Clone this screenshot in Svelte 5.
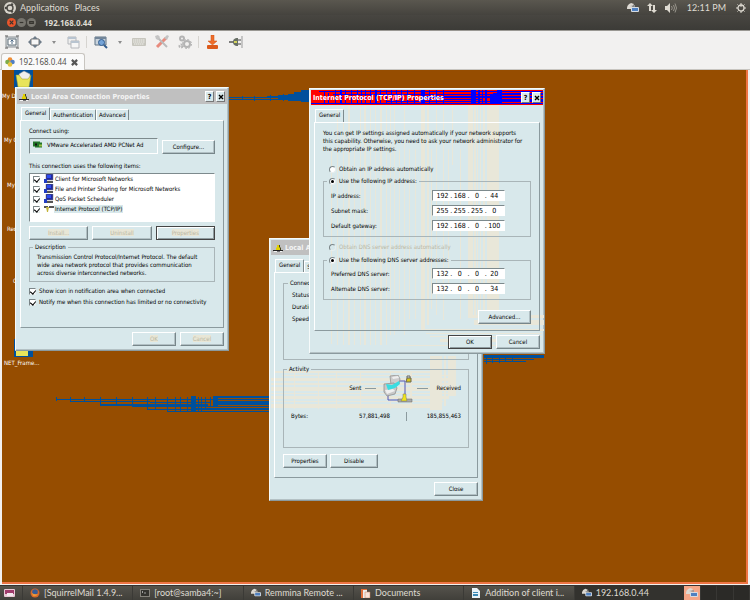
<script>
  const shortcuts = [
    { label: "My Documents", x: 0, y: 22 },
    { label: "My Computer", x: 2, y: 66 },
    { label: "My Network Places", x: 5, y: 111 },
    { label: "Recycle Bin", x: 5, y: 155 },
    { label: "Connections", x: 11, y: 207 },
    { label: "NET_Frame...", x: 2, y: 289 }
  ];

  let items = [
    { name: "Client for Microsoft Networks", icon: "pc", on: true },
    { name: "File and Printer Sharing for Microsoft Networks", icon: "pc", on: true },
    { name: "QoS Packet Scheduler", icon: "pc", on: true },
    { name: "Internet Protocol (TCP/IP)", icon: "proto", on: true, selected: true }
  ];

  const addresses = [
    { id: "ip", label: "IP address:", octets: [192, 168, 0, 44] },
    { id: "mask", label: "Subnet mask:", octets: [255, 255, 255, 0] },
    { id: "gateway", label: "Default gateway:", octets: [192, 168, 0, 100] }
  ];
  const servers = [
    { id: "dns1", label: "Preferred DNS server:", octets: [132, 0, 0, 20] },
    { id: "dns2", label: "Alternate DNS server:", octets: [132, 0, 0, 34] }
  ];

  const tasks = [
    { label: "[SquirrelMail 1.4.9...", icon: "firefox" },
    { label: "[root@samba4:~]", icon: "terminal" },
    { label: "Remmina Remote ...", icon: "remmina" },
    { label: "Documents", icon: "files" },
    { label: "Addition of client i...", icon: "doc" },
    { label: "192.168.0.44", icon: "remmina", active: true }
  ];

  // traces left behind by the dragged windows: [x, y, width, height]
  const smear = [
    [54, 327, 1, 4], [54, 329, 50, 1], [68, 327, 1, 5], [68, 331, 80, 1],
    [82, 327, 1, 5], [98, 327, 1, 9], [98, 334, 108, 2], [114, 327, 1, 8],
    [130, 327, 1, 10], [130, 336, 70, 1], [145, 327, 1, 13], [145, 339, 60, 1],
    [153, 327, 1, 12], [165, 327, 1, 15], [165, 341, 102, 1], [173, 327, 1, 14],
    [178, 327, 1, 14], [185, 327, 1, 14], [189, 326, 5, 16], [196, 327, 1, 14],
    [199, 327, 1, 14], [203, 327, 1, 12], [208, 327, 1, 10], [211, 326, 5, 10],
    [212, 326, 56, 2], [212, 329, 56, 1], [212, 331, 56, 4], [190, 336, 78, 1],
    [194, 338, 74, 2], [104, 329, 110, 1], [148, 332, 60, 1],
    [227, 27, 80, 1], [227, 29, 80, 1], [240, 26, 1, 4], [252, 26, 1, 5],
    [265, 26, 42, 1], [268, 25, 1, 6], [276, 25, 31, 1], [276, 28, 31, 1],
    [281, 24, 1, 7], [286, 24, 21, 3], [286, 30, 21, 1], [292, 22, 15, 8],
    [299, 20, 8, 12],
    [482, 285, 60, 3], [482, 289, 50, 1], [482, 291, 42, 1], [484, 285, 1, 9],
    [490, 285, 1, 8], [497, 285, 1, 8], [503, 285, 1, 7], [510, 285, 1, 6],
    [515, 285, 25, 3]
  ];
  const stripes = [
    [21, 60, 1, 195], [27, 16, 1, 240], [33, 16, 1, 240], [38, 16, 2, 240],
    [44, 60, 1, 196], [50, 16, 1, 240], [54, 16, 2, 240], [60, 16, 1, 240],
    [65, 16, 1, 240], [70, 16, 2, 240], [76, 16, 1, 240], [80, 16, 1, 230],
    [84, 16, 1, 230], [89, 60, 1, 180], [94, 16, 1, 230], [99, 60, 1, 170],
    [105, 60, 1, 170], [111, 16, 4, 226], [117, 16, 2, 220], [121, 60, 1, 160],
    [126, 16, 1, 210], [133, 16, 1, 215], [138, 60, 1, 140], [142, 16, 1, 60],
    [150, 60, 1, 170], [158, 16, 5, 210], [164, 16, 2, 210], [167, 16, 1, 210],
    [170, 16, 1, 210], [173, 16, 2, 210], [177, 16, 12, 215],
    [158, 226, 76, 3], [164, 231, 70, 5], [112, 240, 122, 2],
    [116, 244, 116, 1], [120, 247, 112, 1], [130, 250, 100, 3], [90, 256, 140, 1]
  ];
  const haze = [
    [160, 117, 12, 54], [174, 117, 2, 50], [178, 117, 8, 40],
    [4, 132, 156, 2], [12, 136, 170, 1], [1, 139, 185, 3], [1, 144, 185, 2],
    [1, 148, 185, 4], [1, 154, 182, 1], [1, 157, 178, 3], [1, 162, 172, 1],
    [1, 165, 170, 4], [24, 132, 1, 38], [48, 132, 1, 38], [66, 132, 1, 38],
    [90, 132, 1, 38], [120, 132, 1, 38], [140, 132, 2, 38]
  ];
  const titleBlue = [
    [13, 1, 1, 13], [17, 3, 1, 11], [24, 0, 1, 14], [29, 0, 2, 14], [34, 0, 1, 14],
    [40, 0, 1, 14], [46, 0, 1, 14], [50, 0, 1, 14], [54, 0, 1, 14], [59, 0, 1, 14],
    [64, 0, 2, 14], [69, 0, 1, 14], [75, 0, 1, 14], [80, 0, 1, 14], [85, 0, 1, 14],
    [90, 0, 1, 14], [96, 0, 1, 14], [103, 0, 1, 14], [110, 0, 4, 14], [118, 0, 1, 14],
    [125, 0, 1, 14], [132, 0, 1, 14], [8, 1, 228, 1], [0, 13, 236, 1],
    [22, 4, 214, 1], [75, 11, 161, 1], [112, 6, 124, 2], [112, 9, 60, 1],
    [160, 0, 5, 14], [167, 0, 2, 14], [171, 0, 1, 14], [174, 0, 2, 14],
    [179, 5, 9, 8], [182, 3, 6, 11], [186, 0, 5, 14], [190, 9, 46, 2], [190, 3, 46, 2]
  ];

  let ipMode = "manual";
  let dnsMode = "manual";
  let showIcon = true;
  let notify = true;
</script>

{#snippet rects(list)}
  {#each list as [x, y, width, height]}
    <rect {x} {y} {width} {height} />
  {/each}
{/snippet}

{#snippet netIcon()}
  <svg class="net" viewBox="0 0 10 10" aria-hidden="true">
    <path d="M0 7h10v1H0z" fill="#222" />
    <path d="M1 8h8v1H1z" fill="#f4f4f4" />
    <path d="M4 2h2v2l1 1v2H3V5l1-1z" fill="#e2d000" />
    <path d="M6 2h1v2l1 1v2H7V5L6 4z" fill="#44431c" />
    <path d="M4 8h3v1H4z" fill="#777" />
  </svg>
{/snippet}

{#snippet remmina()}
  <svg class="remmina" viewBox="0 0 12 10" aria-hidden="true">
    <path d="M0 6C0 2 2 1 4 0l3 1-2 3v2z" fill="#ddd9d2" />
    <path d="M3 3l5-1v2z" fill="#999" />
    <rect x="4" y="4" width="8" height="5" rx="1" fill="#d5dbe2" />
    <rect x="5" y="5" width="6" height="3" fill="#4f80c0" />
  </svg>
{/snippet}

{#snippet addressRow(row)}
  <div class="address">
    <label for={row.id}>{row.label}</label>
    <span class="octets">
      {#each row.octets as octet, i}
        {#if i > 0}<span class="dot">.</span>{/if}
        <input id={i === 0 ? row.id : undefined} aria-label={i ? `${row.label} part ${i + 1}` : undefined} value={octet} />
      {/each}
    </span>
  </div>
{/snippet}

<div class="screen">
  <header class="panel-bar">
    <svg class="ubuntu" viewBox="0 0 12 12" aria-hidden="true">
      <circle cx="6" cy="6" r="6" fill="#d8d4cb" />
      <circle cx="6" cy="6" r="3" fill="none" stroke="#4a4843" stroke-width="1.4" />
      <g fill="#4a4843"><circle cx="1.9" cy="6" r="1.2" /><circle cx="8" cy="2.4" r="1.2" /><circle cx="8" cy="9.6" r="1.2" /></g>
    </svg>
    <button>Applications</button>
    <button>Places</button>
    <div class="tray">
      {@render remmina()}
      <svg class="arrows" viewBox="0 0 10 10" aria-hidden="true">
        <path d="M3 0L0 3h2v5h2V3h2zM7 10l3-3H8V2H6v5H4z" fill="#dfdbd2" />
      </svg>
      <svg class="sound" viewBox="0 0 12 10" aria-hidden="true">
        <path d="M0 3h2l3-3v10L2 7H0z" fill="#dfdbd2" />
        <path d="M6.500 3q1.500 2 0 4M8.500 2q2 3 0 6M10 .5q3 4.500 0 9" fill="none" stroke="#99958c" />
      </svg>
      <span>12:11 PM</span>
      <svg class="power" viewBox="0 0 10 10" aria-hidden="true">
        <circle cx="5" cy="5" r="3" fill="none" stroke="#dfdbd2" stroke-width="1.300" />
        <path d="M5 0v4M0 5h2M8 5h2M1.500 1.500l1 1M8.500 1.500l-1 1M1.500 8.500l1-1M8.500 8.500l-1-1M5 8v2" stroke="#dfdbd2" />
      </svg>
    </div>
  </header>

  <div class="title-bar">
    <button class="round close" aria-label="Close"><svg viewBox="0 0 10 10"><path d="M3 3l4 4M7 3L3 7" /></svg></button>
    <button class="round" aria-label="Minimize"><svg viewBox="0 0 10 10"><path d="M3 5h4" /></svg></button>
    <button class="round" aria-label="Maximize"><svg viewBox="0 0 10 10"><path d="M3 4h4v2H3z" /></svg></button>
    <h1>192.168.0.44</h1>
  </div>

  <nav class="toolbar">
    <button aria-label="Fit window">
      <svg viewBox="0 0 14 14">
        <path d="M1 2h12v10H1z" fill="#d9dcde" stroke="#8a9094" />
        <path d="M3 4h8v6H3z" fill="#fff" stroke="#5f6e78" />
        <path d="M0 1h3M11 1h3M0 13h3M11 13h3" stroke="#555" fill="none" />
        <path d="M7 5v4M5.500 6.500L7 5l1.500 1.500" stroke="#506c88" fill="none" />
      </svg>
    </button>
    <button aria-label="Fullscreen">
      <svg viewBox="0 0 14 14">
        <path d="M3 4h8v6H3z" fill="#f6f6f6" stroke="#777" />
        <path d="M7 1l3 3H4zM7 13l3-3H4zM0 7l3-3v6zM14 7l-3-3v6z" fill="#6f7c88" />
      </svg>
    </button>
    <button class="caret" aria-label="Fullscreen options"><svg viewBox="0 0 6 6"><path d="M1 2h4L3 5z" fill="#8c8c8c" /></svg></button>
    <button aria-label="Switch pages">
      <svg viewBox="0 0 14 14">
        <path d="M2 2h8v7H2z" fill="#eee" stroke="#b5b7bb" /><path d="M2 2h8v2H2z" fill="#b8c4d0" />
        <path d="M5 6h8v7H5z" fill="#f6f6f6" stroke="#b5b7bb" /><path d="M5 6h8v2H5z" fill="#b8c4d0" />
      </svg>
    </button>
    <span class="rule"></span>
    <button aria-label="Scaled mode">
      <svg viewBox="0 0 14 14">
        <path d="M1 2h11v8H1z" fill="#c9d3dc" stroke="#617486" /><path d="M1 2h11v2H1z" fill="#738699" />
        <circle cx="7.500" cy="7.500" r="3" fill="#75a4d8" stroke="#345e8e" /><path d="M10 10l3 3" stroke="#345e8e" stroke-width="2" />
      </svg>
    </button>
    <button class="caret" aria-label="Scale options"><svg viewBox="0 0 6 6"><path d="M1 2h4L3 5z" fill="#8c8c8c" /></svg></button>
    <button aria-label="Grab keyboard">
      <svg viewBox="0 0 14 14">
        <rect x="0" y="3" width="14" height="8" rx="1" fill="#c7c6be" />
        <path d="M1 5h12M1 7h12M2 9h10" stroke="#efefea" stroke-dasharray="1.500 .5" />
      </svg>
    </button>
    <button aria-label="Preferences">
      <svg viewBox="0 0 14 14">
        <path d="M2 12L11 3" stroke="#e88b7d" stroke-width="3" />
        <path d="M2 2l10 10" stroke="#bbb" stroke-width="2" />
        <path d="M0 1l3-1 2 2-2 3-2-1zM9 3l3-3 2 1-2 4z" fill="#c4c4c4" />
      </svg>
    </button>
    <button aria-label="Tools">
      <svg viewBox="0 0 14 14">
        <g fill="none" stroke="#b4b4b4">
          <circle cx="9" cy="9" r="3" stroke-width="2" /><circle cx="9" cy="9" r="4.500" stroke-dasharray="2 1.500" />
          <circle cx="4" cy="3.500" r="2" stroke-width="2" /><circle cx="3" cy="11" r="1.500" stroke-width="2" stroke-dasharray="2 1" />
        </g>
      </svg>
    </button>
    <span class="rule"></span>
    <button aria-label="Minimize window">
      <svg viewBox="0 0 14 14">
        <path d="M5 0h3v6h3l-4.500 4L2 6h3z" fill="#ee6d2b" stroke="#cd5012" stroke-width=".5" />
        <rect x="1" y="10" width="11" height="4" rx="1" fill="#dc5a1b" />
      </svg>
    </button>
    <button aria-label="Disconnect">
      <svg viewBox="0 0 14 14">
        <path d="M0 7h5" stroke="#555" stroke-width="1.500" />
        <path d="M9 3C5 3 4 5 4 7s1 4 5 4z" fill="#686f65" /><path d="M5 6h3v2H5z" fill="#d4d35c" />
        <path d="M9 5h3M9 9h3" stroke="#444" /><path d="M13 1v12" stroke="#999" />
      </svg>
    </button>
  </nav>

  <div class="tabs">
    <div class="session">
      <svg viewBox="0 0 10 10" aria-hidden="true">
        <circle cx="5" cy="2.500" r="2.300" fill="#ee8d36" /><circle cx="2.500" cy="5" r="2.300" fill="#7fab4a" />
        <circle cx="7.500" cy="5" r="2.300" fill="#507fc4" /><circle cx="5" cy="7.500" r="2.300" fill="#e6c33c" />
      </svg>
      <span>192.168.0.44</span>
      <button aria-label="Close tab"><svg viewBox="0 0 8 8"><path d="M1 1l6 6M7 1L1 7" stroke="#555" stroke-width="2.500" /></svg></button>
    </div>
  </div>

  <main class="desktop">
    <svg class="smear" width="600" height="400" shape-rendering="crispEdges" aria-hidden="true">
      {@render rects(smear)}
    </svg>
    <svg class="folder" viewBox="0 0 19 18" aria-hidden="true">
      <path d="M0 0h19v18H0z" fill="#00509c" />
      <path d="M5 4l5-3 6 3v7H5z" fill="#eee" stroke="#888" stroke-width=".5" />
      <path d="M2 5h3l3 4h6l3-4-2 12H4z" fill="#e8e45a" stroke="#9b982d" stroke-width=".5" />
    </svg>
    <svg class="folder low" viewBox="0 0 19 18" aria-hidden="true">
      <path d="M0 0h19v18H0z" fill="#00509c" /><path d="M2 4h12v13H2z" fill="#e8e45a" />
    </svg>
    {#each shortcuts as s}
      <a class="shortcut" href="#desktop" style="left: {s.x}px; top: {s.y}px">{s.label}</a>
    {/each}

    <section class="window status">
      <svg class="trail" width="212" height="261" shape-rendering="crispEdges" aria-hidden="true">{@render rects(haze)}</svg>
      <header class="caption">{@render netIcon()}<h2>Local Area Connection Status</h2></header>
      <div class="sheet-tabs"><button class="on">General</button><button>Support</button></div>
      <div class="sheet">
        <fieldset class="connection">
          <legend>Connection</legend>
          <span>Status:</span><span>Duration:</span><span>Speed:</span>
        </fieldset>
        <fieldset class="activity">
          <legend>Activity</legend>
          <div class="traffic">
            <span class="sent">Sent</span><i></i>
            <svg viewBox="0 0 30 28" aria-hidden="true">
              <path d="M15 6h7v17M5 19v6h13" fill="none" stroke="#5357b5" />
              <path d="M7 1l8-1 2 4-1 5-8 1z" fill="#ccc" stroke="#8c8c8c" stroke-width=".7" />
              <path d="M9 2l6-1 1 2-6 1z" fill="#eee" />
              <path d="M1 9l10-1 3 5-2 6-8 2-3-4z" fill="#c8c8c8" stroke="#888" stroke-width=".7" />
              <path d="M2 15l8-1 2 2-8 3z" fill="#efefef" />
              <path d="M3 9l6 1 7-4 1 3-5 4-7 2z" fill="#39dde1" />
              <path d="M24 3h4v4h-5z" fill="#d8c51c" stroke="#665" /><path d="M24 3V1h3v2" fill="none" stroke="#666" />
              <path d="M15 24h14v3H15z" fill="#aaa" stroke="#666" stroke-width=".5" />
              <path d="M20 19h3v3l1 4h-6l2-4z" fill="#f0e51c" stroke="#776" stroke-width=".5" />
            </svg>
            <i class="right"></i><span>Received</span>
          </div>
          <div class="bytes"><span>Bytes:</span><span>57,881,498</span><b></b><span>185,855,463</span></div>
        </fieldset>
        <div class="actions"><button class="btn">Properties</button><button class="btn wide">Disable</button></div>
      </div>
      <footer><button class="btn">Close</button></footer>
    </section>

    <section class="window lan">
      <header class="caption">
        {@render netIcon()}
        <h2>Local Area Connection Properties</h2>
        <button class="sys" aria-label="Help">?</button>
        <button class="sys" aria-label="Close"><svg viewBox="0 0 6 6"><path d="M1 1l4 4M5 1L1 5" /></svg></button>
      </header>
      <div class="sheet-tabs"><button class="on">General</button><button>Authentication</button><button>Advanced</button></div>
      <div class="sheet">
        <p>Connect using:</p>
        <div class="adapter">
          <div class="device">
            <svg viewBox="0 0 10 7" aria-hidden="true"><path d="M0 0h7v1h2v5H2V5H0z" fill="#207529" /><path d="M2 2h2v2H2z" fill="#111" /><path d="M6 3h3v2H6z" fill="#9bc04b" /></svg>
            <span>VMware Accelerated AMD PCNet Ad</span>
          </div>
          <button class="btn">Configure...</button>
        </div>
        <p class="uses">This connection uses the following items:</p>
        <div class="list">
          {#each items as item}
            <label>
              <input type="checkbox" bind:checked={item.on} />
              {#if item.icon === "pc"}
                <svg viewBox="0 0 10 10" aria-hidden="true"><path d="M2 0h7v6H2z" fill="#222a9c" stroke="#777" stroke-width=".5" /><path d="M3 1h4v3H3z" fill="#2d4cf0" /><path d="M1 7h8v2H0z" fill="#555" /><path d="M0 5h3v4H0z" fill="#223cc4" /></svg>
              {:else}
                <svg viewBox="0 0 10 10" aria-hidden="true"><path d="M0 2h4v2H0zM5 2h5v2H5z" fill="#555" /><path d="M2 3h3L4 8H3z" fill="#c4b43a" /></svg>
              {/if}
              <span class:selected={item.selected}>{item.name}</span>
            </label>
          {/each}
        </div>
        <div class="trio">
          <button class="btn" disabled><span>Install...</span></button>
          <button class="btn" disabled><span>Uninstall</span></button>
          <button class="btn default" disabled><span>Properties</span></button>
        </div>
        <fieldset class="about">
          <legend>Description</legend>
          Transmission Control Protocol/Internet Protocol. The default<br />
          wide area network protocol that provides communication<br />
          across diverse interconnected networks.
        </fieldset>
        <label class="check"><input type="checkbox" bind:checked={showIcon} />Show icon in notification area when connected</label>
        <label class="check"><input type="checkbox" bind:checked={notify} />Notify me when this connection has limited or no connectivity</label>
      </div>
      <footer><button class="btn" disabled><span>OK</span></button><button class="btn" disabled><span>Cancel</span></button></footer>
    </section>

    <section class="window tcp">
      <svg class="trail" width="235" height="265" shape-rendering="crispEdges" aria-hidden="true">{@render rects(stripes)}</svg>
      <header class="caption">
        <svg class="paint" width="236" height="15" shape-rendering="crispEdges" aria-hidden="true">{@render rects(titleBlue)}</svg>
        <h2>Internet Protocol (TCP/IP) Properties</h2>
        <button class="sys" aria-label="Help">?</button>
        <button class="sys" aria-label="Close"><svg viewBox="0 0 6 6"><path d="M1 1l4 4M5 1L1 5" /></svg></button>
      </header>
      <div class="sheet-tabs"><button class="on">General</button></div>
      <div class="sheet">
        <p>
          You can get IP settings assigned automatically if your network supports<br />
          this capability. Otherwise, you need to ask your network administrator for<br />
          the appropriate IP settings.
        </p>
        <label class="radio first"><input type="radio" name="ip" value="auto" bind:group={ipMode} />Obtain an IP address automatically</label>
        <fieldset class="ip">
          <legend><label class="radio"><input type="radio" name="ip" value="manual" bind:group={ipMode} />Use the following IP address:</label></legend>
          {#each addresses as row}{@render addressRow(row)}{/each}
        </fieldset>
        <label class="radio off"><input type="radio" name="dns" value="auto" bind:group={dnsMode} disabled />Obtain DNS server address automatically</label>
        <fieldset class="ip dns">
          <legend><label class="radio"><input type="radio" name="dns" value="manual" bind:group={dnsMode} />Use the following DNS server addresses:</label></legend>
          {#each servers as row}{@render addressRow(row)}{/each}
        </fieldset>
        <div class="more"><button class="btn">Advanced...</button></div>
      </div>
      <footer><button class="btn default">OK</button><button class="btn">Cancel</button></footer>
    </section>
  </main>

  <nav class="taskbar">
    <button class="show" aria-label="Show desktop">
      <svg viewBox="0 0 11 9"><rect width="11" height="8" rx="1" fill="#e8c8d4" /><path d="M1 1h9v4H1z" fill="#a03c6c" /><path d="M3 4h6v3H3z" fill="#f3e9ee" /></svg>
    </button>
    {#each tasks as task}
      <button class="task" class:active={task.active}>
        {#if task.icon === "firefox"}
          <svg viewBox="0 0 10 10" aria-hidden="true"><circle cx="5" cy="5" r="4.500" fill="#d4682a" /><circle cx="5" cy="4" r="2.800" fill="#385c96" /><path d="M1 3q1 4 7 3-2 3-5 2z" fill="#ec9638" /></svg>
        {:else if task.icon === "terminal"}
          <svg viewBox="0 0 10 10" aria-hidden="true"><path d="M0 1h10v8H0z" fill="#85827b" /><path d="M1 2h8v6H1z" fill="#34332f" /><path d="M2 3l1 1-1 1M4 5h2" stroke="#ccc" stroke-width=".7" fill="none" /></svg>
        {:else if task.icon === "files"}
          <svg viewBox="0 0 10 10" aria-hidden="true"><path d="M0 1h6v9H0z" fill="#df6f3b" /><path d="M2 2h4v8H2z" fill="#eee" /><path d="M4 4h5v6H4z" fill="#f7e4da" stroke="#c97f5b" stroke-width=".5" /></svg>
        {:else if task.icon === "doc"}
          <svg viewBox="0 0 10 10" aria-hidden="true"><path d="M1 0h5l3 3v7H1z" fill="#eaf3f8" /><path d="M2 4h5v1H2zM2 6h5v2H2z" fill="#3b8ab5" /></svg>
        {:else}
          {@render remmina()}
        {/if}
        <span>{task.label}</span>
      </button>
    {/each}
    <div class="spaces"><span class="current">{@render remmina()}</span><span></span><span></span><span></span></div>
  </nav>
</div>

<style>
  :global(body) {
    margin: 0;
    background: #f2f1f0;
  }
  .screen {
    display: flex;
    flex-direction: column;
    min-height: 100vh;
    overflow: hidden;
    font: 9px/12px Lato, "Open Sans", sans-serif;
    color: #dfdbd2;
  }
  .screen * {
    box-sizing: border-box;
  }
  button {
    padding: 0;
    border: none;
    background: none;
    color: inherit;
    font: inherit;
    white-space: nowrap;
  }
  svg {
    display: block;
    flex: none;
  }
  h1, h2, p {
    margin: 0;
    font-size: inherit;
  }
  .panel-bar {
    display: flex;
    align-items: center;
    gap: 6px;
    height: 15px;
    padding: 0 4px;
    background: linear-gradient(#5a574f, #45433e);
  }
  .ubuntu {
    width: 12px;
    height: 12px;
    margin-right: -2px;
  }
  .tray {
    display: flex;
    align-items: center;
    gap: 8px;
    margin-left: auto;
  }
  .tray span {
    margin: 0 2px;
  }
  .remmina {
    width: 12px;
    height: 10px;
  }
  .arrows, .power {
    width: 10px;
    height: 10px;
  }
  .sound {
    width: 12px;
    height: 10px;
  }
  .title-bar {
    display: flex;
    align-items: center;
    gap: 1px;
    height: 16px;
    padding-left: 7px;
    border-bottom: 1px solid #9a9893;
    background: linear-gradient(#484641, #3c3b37);
  }
  .title-bar h1 {
    margin-left: 7px;
    font: bold 8px/12px "Noto Sans", sans-serif;
  }
  .round {
    width: 9px;
    height: 9px;
    border-radius: 50%;
    background: #77756e;
  }
  .round.close {
    background: #e9552b;
  }
  .round path {
    fill: none;
    stroke: #36342f;
    stroke-width: 1.3;
  }
  .toolbar {
    display: flex;
    align-items: center;
    height: 22px;
    background: #f2f1f0;
  }
  .toolbar button {
    display: flex;
    justify-content: center;
    width: 23px;
  }
  .toolbar .caret {
    width: 15px;
  }
  .toolbar svg {
    width: 14px;
    height: 14px;
  }
  .toolbar .caret svg {
    width: 6px;
    height: 6px;
  }
  .rule {
    width: 1px;
    height: 12px;
    margin: 0 2px;
    background: #d6d4d0;
  }
  .tabs {
    display: flex;
    height: 17px;
    padding-left: 1px;
    border-bottom: 1px solid #c8c5c0;
    background: #f2f1f0;
  }
  .session {
    display: flex;
    align-items: center;
    gap: 4px;
    height: 17px;
    padding: 0 6px 0 3px;
    border: 1px solid #c8c5c0;
    border-bottom: none;
    border-radius: 3px 3px 0 0;
    background: #fafafa;
    color: #55534e;
    font-family: "Noto Sans", sans-serif;
    font-size: 8px;
  }
  .session > svg {
    width: 10px;
    height: 10px;
  }
  .session button svg {
    width: 7px;
    height: 7px;
  }
  .desktop {
    position: relative;
    flex: 1;
    min-height: 513px;
    border: 2px solid #f2f1f0;
    border-width: 0 2px 1px;
    background: #964d00;
    box-shadow: inset -2px -2px #ee7545;
    font: 6px/8px "DejaVu Sans Condensed", "Open Sans", sans-serif;
    color: #000;
  }
  .smear, .trail, .paint {
    position: absolute;
    top: 0;
    left: 0;
  }
  .smear {
    fill: #00509c;
  }
  .folder {
    position: absolute;
    top: 0;
    left: 12px;
    width: 19px;
    height: 18px;
  }
  .folder.low {
    top: 269px;
  }
  .shortcut {
    position: absolute;
    color: #fff;
    text-decoration: none;
    white-space: nowrap;
  }
  .window {
    position: absolute;
    padding: 1px;
    border: 1px solid #f6fafa;
    border-right-color: #8b9a9e;
    border-bottom-color: #8b9a9e;
    background: #d8e8eb;
    box-shadow: inset -1px -1px #b4c1c4;
  }
  .window > * {
    position: relative;
  }
  .window > .trail {
    position: absolute;
    fill: #e9e7d9;
  }
  .lan {
    top: 17px;
    left: 13px;
    width: 214px;
  }
  .status {
    top: 168px;
    left: 267px;
    width: 214px;
  }
  .tcp {
    top: 18px;
    left: 307px;
    width: 236px;
  }
  .caption {
    display: flex;
    align-items: center;
    gap: 2px;
    height: 15px;
    padding: 0 2px;
    overflow: hidden;
    background: #c0c0c0;
    color: #f4f4f4;
  }
  .caption h2 {
    position: relative;
    flex: 1;
    font-size: 7px;
    line-height: 10px;
    white-space: nowrap;
  }
  .net {
    width: 10px;
    height: 10px;
  }
  .tcp .caption {
    background: #f00;
    color: #fff;
  }
  .paint {
    fill: #00f;
  }
  .sys {
    position: relative;
    display: grid;
    place-items: center;
    width: 9px;
    height: 11px;
    border: 1px solid #fff;
    border-right-color: #777;
    border-bottom-color: #777;
    background: #d8e8eb;
    color: #000;
    font-size: 7px;
    font-weight: bold;
  }
  .sys svg {
    width: 6px;
    height: 6px;
    stroke: #000;
    stroke-width: 1.4;
  }
  .sheet-tabs {
    display: flex;
    align-items: flex-end;
    height: 17px;
    padding-left: 4px;
  }
  .sheet-tabs button {
    height: 11px;
    padding: 0 2px;
    border: 1px solid #fff;
    border-right-color: #7d8a8d;
    border-bottom: none;
    border-radius: 1px 1px 0 0;
  }
  .sheet-tabs .on {
    height: 13px;
    padding: 0 3px 2px;
  }
  .sheet {
    display: flex;
    flex-direction: column;
    margin: 0 3px;
    padding: 6px 8px 0;
    border: 1px solid #fff;
    border-right-color: #8b9a9e;
    border-bottom-color: #8b9a9e;
  }
  .btn {
    width: 44px;
    height: 14px;
    border: 1px solid #fff;
    border-right-color: #77868a;
    border-bottom-color: #77868a;
    background: #d8e8eb;
    box-shadow: inset -1px -1px #b2c0c4;
    color: #000;
  }
  .btn.default {
    border: 1px solid #444;
    box-shadow: inset 1px 1px #fff, inset -1px -1px #8e9b9f;
  }
  .btn:disabled {
    color: #b9b7a4;
  }
  .btn:disabled span {
    background: #e8e6d6;
  }
  .window footer {
    display: flex;
    justify-content: flex-end;
    gap: 4px;
    padding: 4px 3px 3px;
  }
  fieldset {
    min-width: 0;
    margin: 0;
    padding: 0 7px;
    border: 1px solid #a9b5b8;
  }
  legend {
    height: 8px;
    margin-left: -4px;
    padding: 0 2px;
  }
  input[type="checkbox"], input[type="radio"] {
    appearance: none;
    position: relative;
    flex: none;
    width: 7px;
    height: 7px;
    margin: 0;
    border: 1px solid #7b8588;
    border-right-color: #e8eeee;
    border-bottom-color: #e8eeee;
    background: #fff;
  }
  input[type="checkbox"]:checked::before {
    content: "";
    position: absolute;
    top: 0;
    left: 1px;
    width: 3px;
    height: 4px;
    border: solid #000;
    border-width: 0 1px 1px 0;
    transform: rotate(40deg);
  }
  input[type="radio"] {
    border-radius: 50%;
  }
  input[type="radio"]:checked::before {
    content: "";
    position: absolute;
    top: 1px;
    left: 1px;
    width: 3px;
    height: 3px;
    border-radius: 50%;
    background: #000;
  }
  input[type="radio"]:disabled {
    background: #d8e8eb;
  }

  .lan .sheet-tabs {
    height: 16px;
  }
  .lan .sheet {
    padding-bottom: 21px;
  }
  .adapter {
    display: flex;
    align-items: flex-end;
    gap: 4px;
    margin-top: 3px;
  }
  .device {
    display: flex;
    flex: 1;
    gap: 4px;
    min-width: 0;
    height: 16px;
    padding: 2px 3px;
    border: 1px solid #7d8a8d;
    border-right-color: #fff;
    border-bottom-color: #fff;
    white-space: nowrap;
  }
  .device svg {
    width: 10px;
    height: 8px;
  }
  .adapter .btn {
    width: 53px;
  }
  .uses {
    margin-top: 8px;
  }
  .list {
    height: 49px;
    margin-top: 3px;
    padding: 0 3px;
    border: 1px solid #7d8a8d;
    border-right-color: #fff;
    border-bottom-color: #fff;
    background: #fff;
  }
  .list label {
    display: flex;
    align-items: center;
    gap: 4px;
    height: 10px;
  }
  .list svg {
    width: 10px;
    height: 10px;
  }
  .list span {
    margin-left: -4px;
    padding: 0 1px;
    white-space: nowrap;
  }
  .selected {
    background: #d8e8eb;
  }
  .trio {
    display: flex;
    gap: 4px;
    margin-top: 4px;
  }
  .trio .btn {
    flex: 1;
  }
  .about {
    height: 39px;
    margin-top: 3px;
    padding-top: 2px;
    white-space: nowrap;
  }
  .check, .radio {
    display: flex;
    align-items: center;
    gap: 3px;
    height: 8px;
    white-space: nowrap;
  }
  .check {
    margin-top: 3px;
  }
  .about + .check {
    margin-top: 5px;
  }

  .status .sheet {
    padding-bottom: 9px;
  }
  .connection {
    display: flex;
    flex-direction: column;
    gap: 4px;
    height: 81px;
    padding: 4px 8px;
  }
  .activity {
    height: 83px;
    margin-top: 5px;
  }
  .traffic {
    display: flex;
    align-items: center;
    gap: 4px;
    height: 30px;
  }
  .sent {
    margin-left: auto;
  }
  .traffic svg {
    width: 30px;
    height: 28px;
    margin: 2px 0 0 3px;
  }
  .traffic i {
    width: 11px;
    height: 1px;
    background: #8b9a9e;
  }
  .traffic .right {
    margin-right: 4px;
  }
  .bytes {
    display: grid;
    grid-template-columns: 1fr 60px 32px 1fr;
    align-items: center;
    height: 10px;
    margin-top: 8px;
  }
  .bytes span + span, .bytes b + span {
    text-align: right;
  }
  .bytes b {
    justify-self: center;
    width: 1px;
    height: 9px;
    background: #8b9a9e;
  }
  .actions {
    display: flex;
    gap: 3px;
    margin-top: 6px;
  }
  .actions .wide {
    width: 48px;
  }

  .tcp .sheet {
    padding-bottom: 6px;
  }
  .tcp p {
    white-space: nowrap;
  }
  .radio {
    padding-left: 6px;
  }
  .radio.first {
    margin-top: 12px;
  }
  .radio.off {
    margin-top: 6px;
    color: #b9b7a4;
  }
  .ip {
    display: flex;
    flex-direction: column;
    gap: 4px;
    margin-top: 4px;
    padding: 5px 25px 5px 7px;
  }
  .ip legend .radio {
    padding-left: 0;
  }
  .dns {
    margin-top: 5px;
    padding-top: 4px;
  }
  .address {
    display: flex;
    align-items: center;
    justify-content: space-between;
    height: 11px;
  }
  .octets {
    display: flex;
    align-items: center;
    width: 73px;
    height: 11px;
    padding: 0 2px;
    border: 1px solid #7d8a8d;
    border-right-color: #fff;
    border-bottom-color: #fff;
    background: #fff;
    font-size: 7px;
  }
  .octets input {
    flex: 1;
    width: 0;
    min-width: 0;
    padding: 0;
    border: none;
    background: none;
    color: inherit;
    font: inherit;
    text-align: center;
  }
  .more {
    display: flex;
    justify-content: flex-end;
    margin-top: 10px;
  }
  .more .btn {
    width: 53px;
  }

  .taskbar {
    display: grid;
    grid-template-columns: 22px repeat(6, 1fr) 66px;
    height: 15px;
    border-top: 1px solid #33322e;
    background: linear-gradient(#55534c, #403f3a);
  }
  .show svg {
    width: 11px;
    height: 9px;
    margin-left: 4px;
  }
  .task {
    display: flex;
    align-items: center;
    gap: 4px;
    padding-left: 7px;
    overflow: hidden;
    border-left: 1px solid #3b3a36;
  }
  .task svg {
    width: 10px;
    height: 10px;
  }
  .task.active {
    background: #33322e;
  }
  .spaces {
    display: grid;
    grid-template-columns: repeat(4, 1fr);
    background: #2b2a27;
  }
  .spaces span {
    display: grid;
    place-items: center;
    border-right: 1px solid #383734;
  }
  .spaces .current {
    background: #f3a688;
  }
</style>
